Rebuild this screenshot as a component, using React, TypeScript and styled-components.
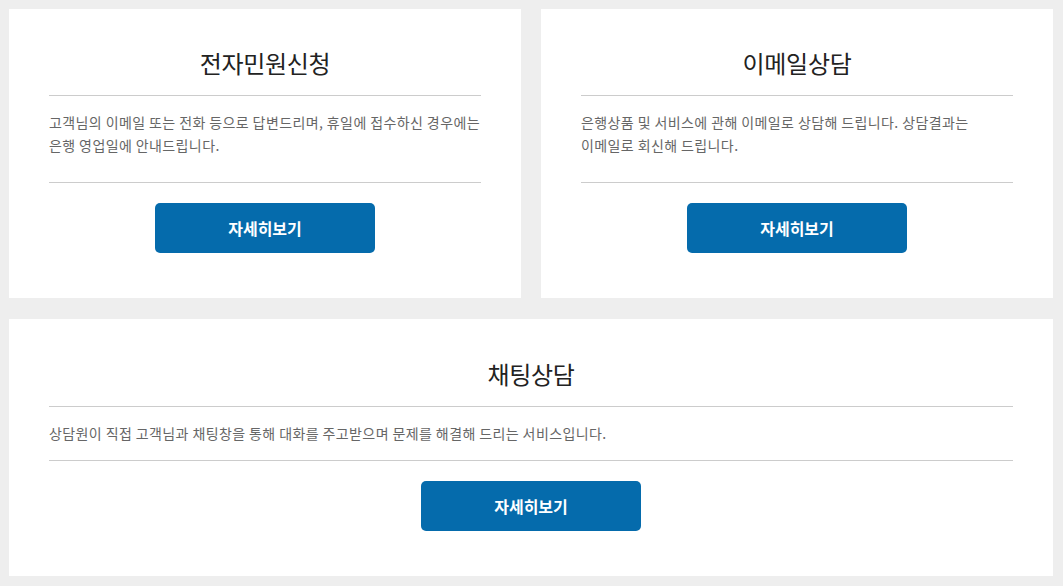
import React from "react";
import styled, { createGlobalStyle } from "styled-components";

const GlobalStyle = createGlobalStyle`
  html, body {
    margin: 0;
    padding: 0;
    background: #eeeeee;
  }
  body {
    font-family: "Noto Sans CJK KR", "Noto Sans", sans-serif;
  }
`;

type Service = {
    title: string;
    lines: string[];
    wide?: boolean;
};

const services: Service[] = [
    {
        title: '전자민원신청',
        lines: ['고객님의 이메일 또는 전화 등으로 답변드리며, 휴일에 접수하신 경우에는', '은행 영업일에 안내드립니다.'],
    },
    {
        title: '이메일상담',
        lines: ['은행상품 및 서비스에 관해 이메일로 상담해 드립니다. 상담결과는', '이메일로 회신해 드립니다.'],
    },
    {
        title: '채팅상담',
        lines: ['상담원이 직접 고객님과 채팅창을 통해 대화를 주고받으며 문제를 해결해 드리는 서비스입니다.'],
        wide: true,
    },
];

const App: React.FC = () => {
    return <>
        <GlobalStyle />
        <Page>
            {services.map((s) => (
                <Card key={s.title} $wide={s.wide}>
                    <Title>{s.title}</Title>
                    <Desc $tall={!s.wide}>
                        {s.lines.map((l, i) => (
                            <React.Fragment key={i}>
                                {i > 0 && <br />}
                                {l}
                            </React.Fragment>
                        ))}
                    </Desc>
                    <ButtonRow>
                        <MoreButton type="button">자세히보기</MoreButton>
                    </ButtonRow>
                </Card>
            ))}
        </Page>
    </>
}

const Page = styled.main`
    display: grid;
    grid-template-columns: 512px 512px;
    column-gap: 20px;
    row-gap: 21px;
    padding: 9px 10px 10px 9px;
    width: 1044px;
`;

const Card = styled.section<{ $wide?: boolean }>`
    grid-column: ${(p) => (p.$wide ? '1 / span 2' : 'auto')};
    background: #ffffff;
    padding: ${(p) => (p.$wide ? '37px' : '36px')} 40px 45px;
    display: flex;
    flex-direction: column;
`;

const Title = styled.h3`
    margin: 0;
    padding-bottom: 14px;
    border-bottom: 1px solid #cccccc;
    text-align: center;
    font-size: 24px;
    line-height: 36px;
    font-weight: 400;
    letter-spacing: -0.3px;
    color: #222222;
`;

const Desc = styled.p<{ $tall?: boolean }>`
    margin: 0;
    padding: 15px 0 ${(p) => (p.$tall ? '25px' : '15px')};
    border-bottom: 1px solid #cccccc;
    font-size: 14px;
    line-height: 23px;
    letter-spacing: 0.4px;
    color: #666666;
    white-space: nowrap;
`;

const ButtonRow = styled.div`
    display: flex;
    justify-content: center;
    padding-top: 20px;
`;

const MoreButton = styled.button`
    width: 220px;
    height: 50px;
    border: none;
    border-radius: 5px;
    background: #056bac;
    color: #ffffff;
    font-family: inherit;
    font-size: 16px;
    font-weight: 700;
    cursor: pointer;
`;

export default App;
